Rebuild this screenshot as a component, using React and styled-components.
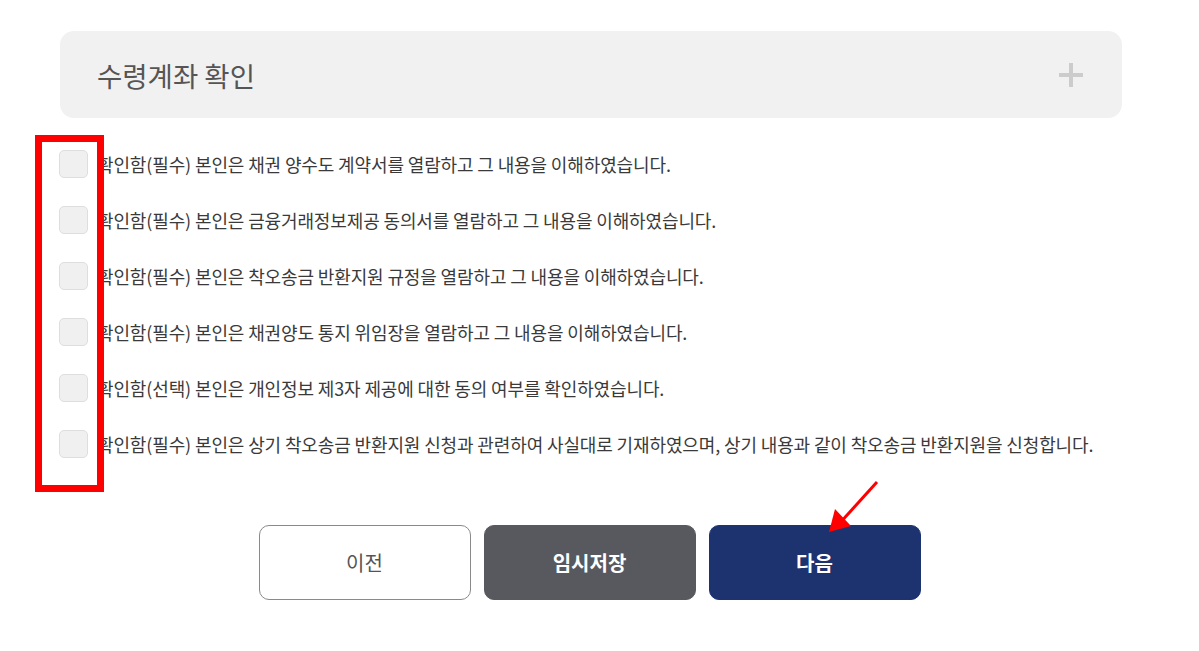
import React from 'react'
import styled, { createGlobalStyle } from 'styled-components'

const GlobalStyle = createGlobalStyle`
  html, body {
    margin: 0;
    padding: 0;
    background: #fff;
    font-family: "Noto Sans CJK KR", "Noto Sans", sans-serif;
  }
`

const Page = styled.div`
  position: relative;
  width: 1199px;
  height: 651px;
  padding: 31px 77px 0 60px;
  box-sizing: border-box;
`

const Panel = styled.div`
  display: flex;
  align-items: center;
  justify-content: space-between;
  height: 87px;
  padding: 0 38px 0 37px;
  background: #f1f1f1;
  border-radius: 14px;
`

const PanelTitle = styled.h2`
  margin: 0;
  font-size: 27.5px;
  font-weight: 400;
  color: #555;
`

const PlusIcon = styled.svg`
  width: 26px;
  height: 26px;
  display: block;
`

const Agreements = styled.ul`
  list-style: none;
  margin: 32px 0 0;
  padding: 0;
  display: flex;
  flex-direction: column;
  gap: 28px;
`

const Agreement = styled.li`
  display: flex;
  align-items: center;
  gap: 9px;
  height: 28px;
`

const Box = styled.span`
  width: 27px;
  height: 26px;
  flex: none;
  margin-left: -1px;
  border: 1px solid #dedede;
  border-radius: 5px;
  background: #f0f0f0;
`

const Label = styled.span`
  font-size: 18px;
  color: #3a3a3a;
  letter-spacing: -0.13px;
  white-space: nowrap;
`

const Buttons = styled.div`
  display: flex;
  justify-content: center;
  gap: 13px;
  margin: 67px 0 0 -3px;
`

const variants = {
  prev: 'background:#fff;color:#555;border:1px solid #8a8a8a;font-weight:400;',
  save: 'background:#58595e;color:#fff;border:1px solid #58595e;font-weight:700;',
  next: 'background:#1c3370;color:#fff;border:1px solid #1c3370;font-weight:700;'
}

const Button = styled.button`
  width: 212px;
  height: 75px;
  border-radius: 10px;
  font-family: inherit;
  font-size: 20px;
  cursor: pointer;
  ${p => variants[p.$kind]}
`

const Highlight = styled.div`
  position: absolute;
  left: 35px;
  top: 135px;
  width: 69px;
  height: 357px;
  box-sizing: border-box;
  border: 7px solid #ff0000;
  pointer-events: none;
`

const Arrow = styled.svg`
  position: absolute;
  left: 820px;
  top: 475px;
  width: 70px;
  height: 70px;
  pointer-events: none;
`

const items = [
  '확인함(필수) 본인은 채권 양수도 계약서를 열람하고 그 내용을 이해하였습니다.',
  '확인함(필수) 본인은 금융거래정보제공 동의서를 열람하고 그 내용을 이해하였습니다.',
  '확인함(필수) 본인은 착오송금 반환지원 규정을 열람하고 그 내용을 이해하였습니다.',
  '확인함(필수) 본인은 채권양도 통지 위임장을 열람하고 그 내용을 이해하였습니다.',
  '확인함(선택) 본인은 개인정보 제3자 제공에 대한 동의 여부를 확인하였습니다.',
  '확인함(필수) 본인은 상기 착오송금 반환지원 신청과 관련하여 사실대로 기재하였으며, 상기 내용과 같이 착오송금 반환지원을 신청합니다.'
]

export default function App() {
  return (
    <Page>
      <GlobalStyle />
      <Panel>
        <PanelTitle>수령계좌 확인</PanelTitle>
        <PlusIcon viewBox="0 0 26 26">
          <path d="M13 1v24M1 13h24" stroke="#cccccc" strokeWidth="4" />
        </PlusIcon>
      </Panel>
      <Agreements>
        {items.map(t => (
          <Agreement key={t}>
            <Box />
            <Label>{t}</Label>
          </Agreement>
        ))}
      </Agreements>
      <Buttons>
        <Button $kind="prev">이전</Button>
        <Button $kind="save">임시저장</Button>
        <Button $kind="next">다음</Button>
      </Buttons>
      <Highlight />
      <Arrow viewBox="0 0 70 70">
        <path d="M57 7L19 49" stroke="#ff0000" strokeWidth="3" />
        <path d="M9 57L15 34L31 51Z" fill="#ff0000" />
      </Arrow>
    </Page>
  )
}
